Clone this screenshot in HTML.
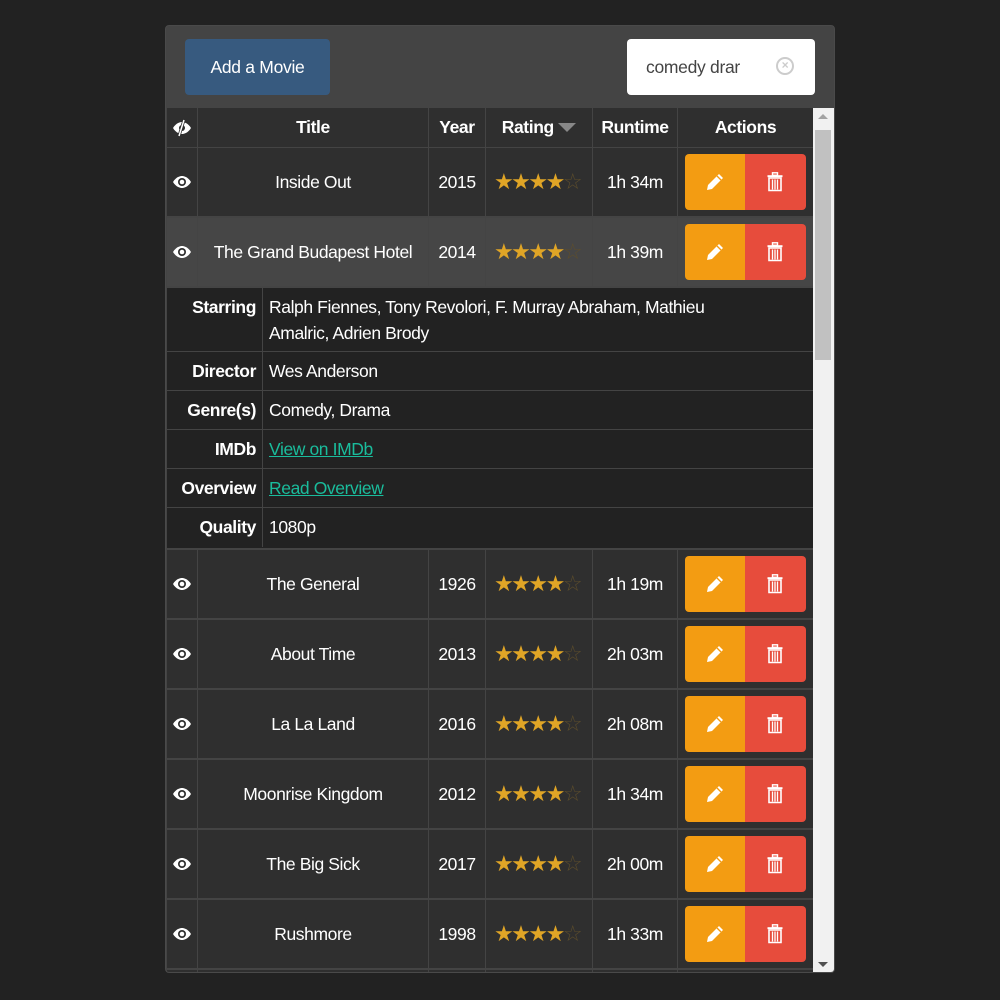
<!DOCTYPE html>
<html><head><meta charset="utf-8"><style>
*{box-sizing:border-box;margin:0;padding:0}
body{width:1000px;height:1000px;background:#222;font-family:"Liberation Sans",sans-serif;color:#fff;overflow:hidden;position:relative}
#box{position:absolute;left:165px;top:25px;width:670px;height:948px;background:#444;border-radius:4px;overflow:hidden;border:1px solid #4a4a4a}
.add{position:absolute;left:19px;top:13px;width:145px;height:56px;background:#375a7f;border-radius:4px;font-size:17.5px;line-height:56px;text-align:center;letter-spacing:-0.3px}
.search{position:absolute;left:461px;top:13px;width:188px;height:56px;background:#fff;border-radius:4px;color:#444;font-size:17.5px;line-height:56px;padding-left:19px;letter-spacing:-0.3px}
.clr{position:absolute;left:149px;top:18px;width:18px;height:18px;border:2px solid #ccc;border-radius:50%;color:#ccc;font-size:12px;line-height:13px;text-align:center;font-weight:bold}
#tbl{position:absolute;left:1px;top:82px;width:646px;height:865px;background:#2f2f2f;overflow:hidden}
.row{position:absolute;left:0;width:646px;display:flex;border-bottom:2px solid #444}
.row>div{border-right:1px solid #444;display:flex;align-items:center;justify-content:center;font-size:17.5px;letter-spacing:-0.4px;height:100%}
.c0{width:31px}.c1{width:231px}.c2{width:57px}.c3{width:107px}.c4{width:85px}.c5{width:135px;border-right:none!important}
.hd>div{font-weight:bold}
.stars{font-family:"DejaVu Sans",sans-serif;font-size:22px;color:#e0a526;letter-spacing:-2.5px;margin-left:-4px}
.stars span{color:#5e4e2c}
.btns{display:flex;width:121px;height:56px;border-radius:4px;overflow:hidden;margin-left:-1px}
.ed{width:60px;background:#f39c12;display:flex;align-items:center;justify-content:center}
.dl{width:61px;background:#e74c3c;display:flex;align-items:center;justify-content:center}
#det{position:absolute;left:0;top:180px;width:646px;height:262px;background:#222;border-bottom:2px solid #444}
.dr{display:flex;border-bottom:1px solid #444}
.dr:last-child{border-bottom:none}
.dl1{width:96px;border-right:1px solid #444;text-align:right;font-weight:bold;padding:6px 6px 0 0;font-size:17.5px;letter-spacing:-0.4px;line-height:26px}
.dv{flex:1;padding:6px 60px 0 6px;font-size:17.5px;letter-spacing:-0.4px;line-height:26px}
a{color:#1abc9c;text-decoration:underline}
#sb{position:absolute;left:647px;top:82px;width:21px;height:865px;background:#f1f1f1}
#sb .th{position:absolute;left:2px;top:22px;width:16px;height:230px;background:#c1c1c1}
</style></head><body>
<div id="box">
<div class="add">Add a Movie</div>
<div class="search">comedy drar<div class="clr">×</div></div>
<div id="tbl">
<div class="row hd" style="top:0;height:40px;border-bottom-width:1px">
<div class="c0"><svg width="20" height="18" viewBox="0 0 20 18"><path d="M1 9C4 4 8 3 10 3s6 1 9 6c-3 5-7 6-9 6S4 14 1 9z" fill="#fff"/><circle cx="10" cy="9" r="3" fill="#2f2f2f"/><path d="M12 1L7 17" stroke="#2f2f2f" stroke-width="3"/><path d="M12 1L7 17" stroke="#fff" stroke-width="1.5"/></svg></div>
<div class="c1">Title</div><div class="c2">Year</div><div class="c3">Rating&nbsp;<svg width="18" height="10"><path d="M0 0h18L9 9z" fill="#888"/></svg></div><div class="c4">Runtime</div><div class="c5">Actions</div></div>
</div>
<div id="sb"><div style="position:absolute;left:5px;top:6px;border:5px solid transparent;border-bottom:5px solid #a3a3a3;border-top:0"></div><div class="th"></div><div style="position:absolute;left:5px;bottom:6px;border:5px solid transparent;border-top:5px solid #505050;border-bottom:0"></div></div>
</div>
<script>
var eye='<svg width="20" height="16" viewBox="0 0 20 16"><path d="M1 8C4 3 8 2 10 2s6 1 9 6c-3 5-7 6-9 6S4 13 1 8z" fill="#fff"/><circle cx="10" cy="8" r="4" fill="#2f2f2f"/><circle cx="10" cy="8" r="2.3" fill="#fff"/></svg>';
var pen='<svg width="20" height="20" viewBox="0 0 20 20"><path d="M14 2l4 4L7 17l-5 1 1-5z" fill="#fff"/><path d="M12 4l4 4" stroke="#f39c12" stroke-width="1.3"/></svg>';
var tr='<svg width="16" height="20" viewBox="0 0 16 20"><rect x="5.5" y="0.8" width="5" height="2.5" fill="none" stroke="#fff" stroke-width="1.4"/><rect x="0.5" y="3.2" width="15" height="2" fill="#fff"/><path d="M2 6h12v12.5H2z" fill="none" stroke="#fff" stroke-width="1.6"/><path d="M5.5 7.5v10M8 7.5v10M10.5 7.5v10" stroke="#fff" stroke-width="1.3"/></svg>';
var rows=[["Inside Out","2015","1h 34m",40],["The Grand Budapest Hotel","2014","1h 39m",110,1],
["The General","1926","1h 19m",442],["About Time","2013","2h 03m",512],["La La Land","2016","2h 08m",582],["Moonrise Kingdom","2012","1h 34m",652],["The Big Sick","2017","2h 00m",722],["Rushmore","1998","1h 33m",792],["","","",862]];
var t=document.getElementById('tbl'),h='';
rows.forEach(function(r){
var bg=r[4]?'background:#464646;':'';
if(!r[0]){h+='<div class="row" style="top:'+r[3]+'px;height:70px"><div class="c0"></div><div class="c1"></div><div class="c2"></div><div class="c3"></div><div class="c4"></div><div class="c5"></div></div>';return;}
h+='<div class="row" style="top:'+r[3]+'px;height:70px;'+bg+'"><div class="c0">'+eye+'</div><div class="c1">'+r[0]+'</div><div class="c2">'+r[1]+'</div><div class="c3"><span class="stars">★★★★<span>☆</span></span></div><div class="c4">'+r[2]+'</div><div class="c5"><div class="btns"><div class="ed">'+pen+'</div><div class="dl">'+tr+'</div></div></div></div>';
});
h+='<div id="det">'+
'<div class="dr" style="height:64px"><div class="dl1">Starring</div><div class="dv">Ralph Fiennes, Tony Revolori, F. Murray Abraham, Mathieu Amalric, Adrien Brody</div></div>'+
'<div class="dr" style="height:39px"><div class="dl1">Director</div><div class="dv">Wes Anderson</div></div>'+
'<div class="dr" style="height:39px"><div class="dl1">Genre(s)</div><div class="dv">Comedy, Drama</div></div>'+
'<div class="dr" style="height:39px"><div class="dl1">IMDb</div><div class="dv"><a>View on IMDb</a></div></div>'+
'<div class="dr" style="height:39px"><div class="dl1">Overview</div><div class="dv"><a>Read Overview</a></div></div>'+
'<div class="dr" style="height:39px"><div class="dl1">Quality</div><div class="dv">1080p</div></div></div>';
t.insertAdjacentHTML('beforeend',h);
</script>
</body></html>
